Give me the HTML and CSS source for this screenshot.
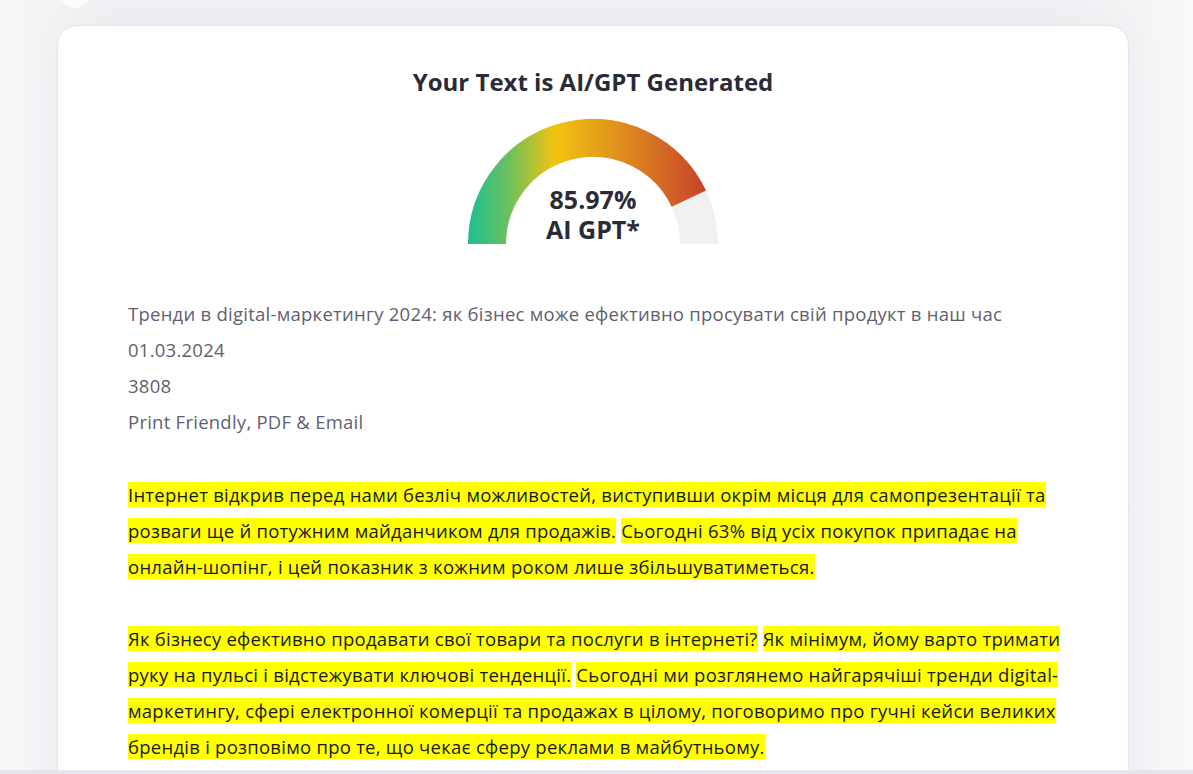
FILE: index.html
```html
<!DOCTYPE html>
<html lang="uk">
<head>
<meta charset="utf-8">
<title>AI/GPT Detector Result</title>
<link rel="stylesheet" href="styles.css">
</head>
<body>
<div class="blob"></div>
<main class="card">
  <h1 class="title">Your Text is AI/GPT Generated</h1>
  <div class="gauge">
    <svg class="gauge-svg" width="250" height="125" viewBox="0 0 250 125">
      <defs>
        <linearGradient id="g" gradientUnits="userSpaceOnUse" x1="0" y1="0" x2="240" y2="0">
          <stop offset="0" stop-color="#1dbf93"/>
          <stop offset="0.18" stop-color="#72c05a"/>
          <stop offset="0.36" stop-color="#f2c40e"/>
          <stop offset="0.62" stop-color="#e0911d"/>
          <stop offset="1" stop-color="#c7402a"/>
        </linearGradient>
      </defs>
      <path d="M19 125 A106 106 0 0 1 231 125" fill="none" stroke="#f1f1f1" stroke-width="38"/>
      <path d="M19 125 A106 106 0 0 1 220.84 79.70" fill="none" stroke="url(#g)" stroke-width="38"/>
    </svg>
    <div class="gauge-label">
      <span class="gauge-value">85.97%</span>
      <span class="gauge-kind">AI GPT*</span>
    </div>
  </div>
  <div class="meta">
    <p>Тренди в digital-маркетингу 2024: як бізнес може ефективно просувати свій продукт в наш час</p>
    <p>01.03.2024</p>
    <p>3808</p>
    <p>Print Friendly, PDF &amp; Email</p>
  </div>
  <div class="article">
    <p><span class="hl">Інтернет відкрив перед нами безліч можливостей, виступивши окрім місця для самопрезентації та розваги ще й потужним майданчиком для продажів.</span> <span class="hl">Сьогодні 63% від усіх покупок припадає на онлайн-шопінг, і цей показник з кожним роком лише збільшуватиметься.</span></p>
    <p><span class="hl">Як бізнесу ефективно продавати свої товари та послуги в інтернеті?</span> <span class="hl">Як мінімум, йому варто тримати руку на пульсі і відстежувати ключові тенденції.</span> <span class="hl">Сьогодні ми розглянемо найгарячіші тренди digital-маркетингу, сфері електронної комерції та продажах в цілому, поговоримо про гучні кейси великих брендів і розповімо про те, що чекає сферу реклами в майбутньому.</span></p>
  </div>
</main>
<div class="bottom-bar"></div>
</body>
</html>
```
FILE: styles.css
```css
html, body {
  margin: 0;
  height: 100%;
  overflow: hidden;
}
body {
  background: linear-gradient(90deg, #f7f7f9 0%, #f0f0f3 10%, #f0f0f3 88%, #f8f8fa 100%);
  font-family: "Open Sans", "Noto Sans", sans-serif;
  padding: 25px 64px 0 57px;
  box-sizing: border-box;
  position: relative;
}
.blob {
  position: absolute;
  left: 58px;
  top: -30px;
  width: 34px;
  height: 38px;
  border-radius: 50%;
  background: #fbfbfc;
}
.card {
  background: #fff;
  border: 1px solid #e4e4ee;
  border-radius: 20px;
  box-shadow: 0 0 40px rgba(220, 220, 230, 0.35);
  padding: 40px 58px 60px 58px;
  min-height: 900px;
  box-sizing: border-box;
}
.title {
  margin: 0;
  text-align: center;
  font-size: 24px;
  line-height: 32px;
  font-weight: 700;
  color: #2b2b38;
}
.gauge {
  position: relative;
  width: 250px;
  height: 125px;
  margin: 21px auto 0;
}
.gauge-svg {
  display: block;
}
.gauge-label {
  position: absolute;
  left: 0;
  right: 0;
  bottom: 0;
  display: flex;
  flex-direction: column;
  align-items: center;
  color: #2b2b38;
  font-weight: 700;
  font-size: 25px;
  line-height: 30px;
}
.meta {
  margin-top: 52px;
  padding-left: 12px;
  color: #5f5f72;
  font-size: 18.5px;
  letter-spacing: 0.25px;
  line-height: 36px;
}
.meta p {
  margin: 0;
}
.article {
  margin-top: 37px;
  padding-left: 12px;
  font-size: 18.5px;
  letter-spacing: 0.25px;
  line-height: 36px;
  color: #1a1a1a;
}
.article p {
  margin: 0 0 36px;
}
.hl {
  background: #ffff00;
}
.bottom-bar {
  position: fixed;
  left: 0;
  right: 0;
  bottom: 0;
  height: 4px;
  background: #e6e6ea;
}
```
